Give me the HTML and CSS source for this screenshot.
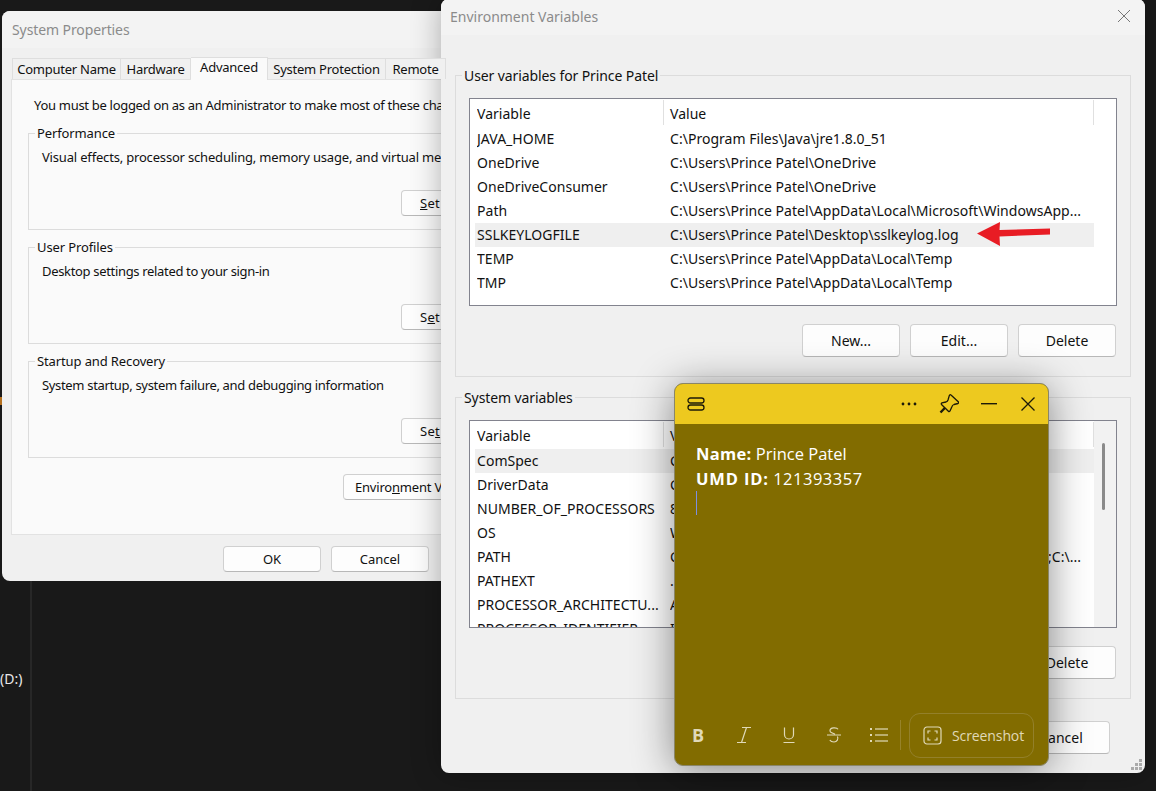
FILE: index.html
```html
<!DOCTYPE html>
<html lang="en">
<head>
<meta charset="utf-8">
<title>Environment Variables</title>
<link rel="stylesheet" href="styles.css">
</head>
<body>
<main class="desktop">
  <div class="bg-line"></div>
  <div class="bg-tick"></div>
  <div class="bg-drive">(D:)</div>

  <section class="window sys">
    <header class="sys-title">System Properties</header>
    <nav class="tabs">
      <span class="tab">Computer Name</span>
      <span class="tab">Hardware</span>
      <span class="tab tab-active">Advanced</span>
      <span class="tab">System Protection</span>
      <span class="tab">Remote</span>
    </nav>
    <div class="sys-panel">
      <p class="admin-note">You must be logged on as an Administrator to make most of these cha</p>
      <fieldset class="group">
        <legend>Performance</legend>
        <p class="line-wide">Visual effects, processor scheduling, memory usage, and virtual me</p>
        <div class="group-actions"><button class="btn btn-clip"><u>S</u>et</button></div>
      </fieldset>
      <fieldset class="group">
        <legend>User Profiles</legend>
        <p>Desktop settings related to your sign-in</p>
        <div class="group-actions"><button class="btn btn-clip">S<u>e</u>t</button></div>
      </fieldset>
      <fieldset class="group">
        <legend>Startup and Recovery</legend>
        <p>System startup, system failure, and debugging information</p>
        <div class="group-actions"><button class="btn btn-clip">Se<u>t</u></button></div>
      </fieldset>
      <div class="env-row"><button class="btn btn-env">Enviro<u>n</u>ment V</button></div>
    </div>
    <footer class="sys-footer">
      <button class="btn">OK</button>
      <button class="btn">Cancel</button>
    </footer>
  </section>

  <section class="window env">
    <header class="env-title">
      <span>Environment Variables</span>
      <svg class="env-close" width="14" height="14" viewBox="0 0 14 14"><path d="M1 1L13 13M13 1L1 13" stroke="#777" stroke-width="1" fill="none"/></svg>
    </header>
    <div class="env-body">
      <fieldset class="var-group">
        <legend>User variables for Prince Patel</legend>
        <div class="list">
          <div class="row row-head"><span>Variable</span><span>Value</span></div>
          <div class="row"><span>JAVA_HOME</span><span>C:\Program Files\Java\jre1.8.0_51</span></div>
          <div class="row"><span>OneDrive</span><span>C:\Users\Prince Patel\OneDrive</span></div>
          <div class="row"><span>OneDriveConsumer</span><span>C:\Users\Prince Patel\OneDrive</span></div>
          <div class="row"><span>Path</span><span>C:\Users\Prince Patel\AppData\Local\Microsoft\WindowsApp...</span></div>
          <div class="row row-sel"><span>SSLKEYLOGFILE</span><span>C:\Users\Prince Patel\Desktop\sslkeylog.log</span></div>
          <div class="row"><span>TEMP</span><span>C:\Users\Prince Patel\AppData\Local\Temp</span></div>
          <div class="row"><span>TMP</span><span>C:\Users\Prince Patel\AppData\Local\Temp</span></div>
          <svg class="arrow" width="76" height="26" viewBox="0 0 76 26"><path d="M1 12.5L24 1L23.5 9L74 7.5L74 13.5L23.5 15.5L24 25Z" fill="#e81c24"/></svg>
        </div>
        <div class="var-actions">
          <button class="btn">New...</button>
          <button class="btn">Edit...</button>
          <button class="btn">Delete</button>
        </div>
      </fieldset>
      <fieldset class="var-group var-group-sys">
        <legend>System variables</legend>
        <div class="list">
          <div class="row row-head"><span>Variable</span><span>V</span></div>
          <div class="row row-sel"><span>ComSpec</span><span>C</span></div>
          <div class="row"><span>DriverData</span><span>C</span></div>
          <div class="row"><span>NUMBER_OF_PROCESSORS</span><span>8</span></div>
          <div class="row"><span>OS</span><span>W</span></div>
          <div class="row"><span>PATH</span><span class="val-split"><span>C</span><span>;C:\...</span></span></div>
          <div class="row"><span>PATHEXT</span><span>.</span></div>
          <div class="row"><span>PROCESSOR_ARCHITECTU...</span><span>A</span></div>
          <div class="row"><span>PROCESSOR_IDENTIFIER</span><span>I</span></div>
          <div class="scrollbar"><div class="thumb"></div></div>
        </div>
        <div class="var-actions">
          <button class="btn">Delete</button>
        </div>
      </fieldset>
      <div class="env-footer">
        <button class="btn">Cancel</button>
      </div>
    </div>
    <svg class="grip" width="12" height="12" viewBox="0 0 12 12" fill="#aaa"><rect x="8" y="0" width="3" height="3"/><rect x="4" y="4" width="3" height="3"/><rect x="8" y="4" width="3" height="3"/><rect x="0" y="8" width="3" height="3"/><rect x="4" y="8" width="3" height="3"/><rect x="8" y="8" width="3" height="3"/></svg>
  </section>

  <section class="window note">
    <header class="note-head">
      <svg class="note-menu" width="18" height="14" viewBox="0 0 18 14" fill="none" stroke="#1c1a08" stroke-width="1.3"><rect x="1" y="1" width="16" height="5" rx="2.5"/><rect x="1" y="8" width="16" height="5" rx="2.5"/></svg>
      <div class="note-tools">
        <svg width="16" height="4" viewBox="0 0 16 4" fill="#1c1a08"><circle cx="2" cy="2" r="1.4"/><circle cx="8" cy="2" r="1.4"/><circle cx="14" cy="2" r="1.4"/></svg>
        <svg width="20" height="20" viewBox="0 0 20 20" fill="none" stroke="#1c1a08" stroke-width="1.3" stroke-linejoin="round"><path d="M12 1L19.5 8a1 1 0 0 1-.5 1.5L15 10.5Q13.5 11 13 12.5L11 17a1 1 0 0 1-1.6.2L2.5 10.5a1 1 0 0 1 .4-1.6L7 8Q8.5 7.5 9 6L10.3 1.6a1 1 0 0 1 1.7-.6Z"/><path d="M5.8 14L1.5 18.5" stroke-width="2.4"/></svg>
        <svg width="17" height="2" viewBox="0 0 17 2"><rect width="16" height="1.4" fill="#1c1a08"/></svg>
        <svg width="16" height="16" viewBox="0 0 16 16"><path d="M1.5 1.5L14.5 14.5M14.5 1.5L1.5 14.5" stroke="#1c1a08" stroke-width="1.3" fill="none"/></svg>
      </div>
    </header>
    <div class="note-body">
      <p><b>Name:</b> Prince Patel</p>
      <p><b class="umd">UMD ID:</b> <span class="digits">121393357</span></p>
      <div class="caret"></div>
    </div>
    <footer class="note-bar">
      <span class="bold-icon">B</span>
      <svg width="16" height="18" viewBox="0 0 16 18" fill="none" stroke="#e0d9b8" stroke-width="1.2"><path d="M5 1.5H14M0 16.5H9M9.5 1.5L4.5 16.5"/></svg>
      <svg width="16" height="18" viewBox="1 0 16 18" fill="none" stroke="#e0d9b8" stroke-width="1.2"><path d="M3.5 1.5V8.5a4.5 4.5 0 0 0 9 0V1.5M2.5 16.5H13.5"/></svg>
      <svg width="16" height="18" viewBox="1 0 16 18" fill="none" stroke="#e0d9b8" stroke-width="1.2"><path d="M12 3.2C11 1.5 4 1 4 4.8C4 7 8 7.6 9 8M1 9H15M11.4 10.5C12.8 13 11 16 8 16C6 16 4.5 15.2 3.8 14"/></svg>
      <svg class="list-icon" width="18" height="14" viewBox="0 0 18 14" fill="#e0d9b8"><rect x="0" y="0" width="2" height="2"/><rect x="0" y="6" width="2" height="2"/><rect x="0" y="12" width="2" height="2"/><rect x="5" y="0.4" width="13" height="1.2"/><rect x="5" y="6.4" width="13" height="1.2"/><rect x="5" y="12.4" width="13" height="1.2"/></svg>
      <span class="bar-sep"></span>
      <span class="shot">
        <svg width="19" height="19" viewBox="0 0 19 19" fill="none" stroke="#e0d9b8" stroke-width="1.2"><rect x="1" y="1" width="17" height="17" rx="3"/><path d="M5 7.5V5H7.5M11.5 5H14V7.5M14 11.5V14H11.5M7.5 14H5V11.5"/></svg>
        Screenshot
      </span>
    </footer>
  </section>
</main>
</body>
</html>
```

FILE: styles.css
```css
* { box-sizing: border-box; }
html, body { margin: 0; height: 100%; }
body { background: #191919; overflow: hidden; }
.desktop {
  position: relative;
  width: 1156px;
  height: 791px;
  overflow: hidden;
  background: #191919;
  font-family: "Noto Sans", "Open Sans", sans-serif;
  font-size: 13px;
  color: #111;
}
.bg-line { position: absolute; left: 30px; top: 581px; bottom: 0; width: 2px; background: #272727; }
.bg-tick { position: absolute; left: 0; top: 397px; width: 2px; height: 8px; background: #b5701e; }
.bg-drive { position: absolute; left: 0; top: 669px; color: #e8e8e8; font-size: 14px; line-height: 19px; }
.window { position: absolute; }
button { font: inherit; color: inherit; }
.btn {
  flex: none;
  height: 26px;
  width: 98px;
  padding: 0;
  background: #fdfdfd;
  border: 1px solid #d0d0d0;
  border-bottom-color: #b8b8b8;
  border-radius: 4px;
  white-space: nowrap;
}
.btn-clip { text-align: left; padding-left: 18px; letter-spacing: 0.3px; }

/* System Properties */
.sys {
  left: 2px;
  top: 11px;
  width: 545px;
  height: 570px;
  display: flex;
  flex-direction: column;
  background: #f0f0f0;
  border-radius: 8px;
  overflow: hidden;
}
.sys-title {
  height: 37px;
  flex: none;
  padding: 9px 10px 0;
  background: #f3f3f3;
  color: #8b8b8b;
  font-size: 14px;
  line-height: 19px;
  letter-spacing: -0.1px;
}
.tabs {
  flex: none;
  display: flex;
  align-items: flex-end;
  height: 23px;
  margin-top: 8px;
  padding: 0 0 0 10px;
  position: relative;
  z-index: 1;
  letter-spacing: -0.25px;
}
.tab {
  flex: none;
  height: 21px;
  text-align: center;
  line-height: 20px;
  background: #f0f0f0;
  border: 1px solid #dedede;
  border-bottom: 0;
  border-left: 0;
}
.tab:nth-child(1) { width: 109px; border-left: 1px solid #dedede; }
.tab:nth-child(2) { width: 70px; }
.tab:nth-child(3) { width: 77px; }
.tab:nth-child(4) { width: 118px; }
.tab:nth-child(5) { width: 60px; }
.tab-active {
  height: 23px;
  line-height: 19px;
  background: #fafafa;
  margin-bottom: -1px;
}
.sys-panel {
  flex: 1;
  margin: 0 9px;
  padding: 15px 24px 0 16px;
  width: 525px;
  background: #fafafa;
  border: 1px solid #e2e2e2;
  display: flex;
  flex-direction: column;
}
.admin-note { margin: 0 0 11px 6px; line-height: 20px; white-space: nowrap; letter-spacing: -0.3px; }
.group {
  margin: 0 0 10px;
  padding: 0 0 0 13px;
  height: 104px;
  border: 1px solid #dcdcdc;
  flex: none;
}
.group legend { padding: 0 2px; margin-left: -7px; line-height: 14px; height: 14px; letter-spacing: -0.12px; }
.group p { margin: 0; line-height: 20px; padding-top: 7px; white-space: nowrap; letter-spacing: -0.33px; }
.group .line-wide { letter-spacing: -0.18px; }
.group-actions { display: flex; justify-content: flex-end; padding-top: 23px; padding-right: 11px; }
.env-row { display: flex; justify-content: flex-end; padding-top: 6px; }
.btn-env { width: 168px; text-align: left; padding-left: 11px; letter-spacing: -0.2px; }
.sys-footer {
  flex: none;
  height: 46px;
  display: flex;
  gap: 10px;
  justify-content: flex-end;
  align-items: center;
  padding: 2px 118px 0 0;
}

/* Environment Variables */
.env {
  left: 441px;
  top: -1px;
  width: 704px;
  height: 774px;
  background: #f0f0f0;
  border-radius: 8px;
  box-shadow: 0 0 30px rgba(0,0,0,.3);
  display: flex;
  flex-direction: column;
  overflow: hidden;
}
.env-title {
  flex: none;
  height: 36px;
  padding: 8px 14px 0 9px;
  display: flex;
  justify-content: space-between;
  background: #f3f3f3;
  color: #8b8b8b;
  font-size: 14px;
  line-height: 19px;
}
.env-close { margin-top: 2px; }
.env-body { flex: 1; padding: 32px 14px 0 14px; display: flex; flex-direction: column; }
.var-group {
  margin: 0;
  padding: 0 13px;
  height: 310px;
  border: 1px solid #dcdcdc;
  flex: none;
}
.var-group legend { padding: 0 2px; margin-left: -7px; line-height: 18px; height: 16px; font-size: 14px; letter-spacing: -0.1px; }
.var-group-sys { margin-top: 12px; }
.list {
  position: relative;
  height: 208px;
  margin-top: 15px;
  padding: 0 22px 0 5px;
  background: #fff;
  border: 1px solid #82838e;
  overflow: hidden;
}
.row {
  display: grid;
  grid-template-columns: 193px 1fr;
  height: 24px;
  line-height: 24px;
  padding-left: 2px;
  font-size: 14px;
  white-space: nowrap;
  letter-spacing: 0.03px;
}
.row > span { overflow: hidden; padding-right: 4px; }
.row-head { height: 28px; line-height: 29px; }
.row-head > span + span { border-left: 1px solid #e0e0e0; margin-left: -7px; padding-left: 6px; border-right: 1px solid #e0e0e0; margin-top: 1px; height: 25px; line-height: 27px; }
.row-sel { background: #efefef; }
.row > .val-split { display: flex; justify-content: space-between; padding-right: 13px; }
.arrow { position: absolute; left: 506px; top: 122px; }
.scrollbar { position: absolute; right: 0; top: 0; bottom: 0; width: 22px; background: #f2f2f2; }
.thumb { position: absolute; left: 8px; top: 22px; width: 3px; height: 67px; border-radius: 2px; background: #8a8a8a; }
.var-actions { display: flex; gap: 10px; justify-content: flex-end; padding: 18px 1px 0 0; }
.var-actions .btn { height: 33px; font-size: 14px; }
.env-footer { display: flex; gap: 10px; justify-content: flex-end; padding: 22px 21px 0 0; }
.env-footer .btn { height: 33px; font-size: 14px; }
.grip { position: absolute; right: 2px; bottom: 2px; }

/* Sticky note */
.note {
  left: 674px;
  top: 383px;
  width: 375px;
  height: 383px;
  background: #826c00;
  border: 1px solid #8a8668;
  border-radius: 9px;
  box-shadow: 0 4px 40px rgba(0,0,0,.45);
  display: flex;
  flex-direction: column;
  font-family: "Open Sans", "Noto Sans", sans-serif;
  color: #fff;
  overflow: hidden;
}
.note-head {
  flex: none;
  height: 40px;
  background: #edc91f;
  display: flex;
  align-items: center;
  justify-content: space-between;
  padding: 0 12px;
}
.note-tools { display: flex; align-items: center; gap: 22px; }
.note-body { flex: 1; padding: 17px 21px 0; font-size: 16.5px; line-height: 25px; }
.note-body p { margin: 0; white-space: nowrap; }
.note-body b { letter-spacing: 0.3px; }
.note-body .umd { letter-spacing: 0.85px; }
.digits { letter-spacing: 0.5px; }
.caret { width: 1px; height: 24px; background: #7d8fe0; }
.note-bar {
  flex: none;
  height: 59px;
  padding: 0 0 1px 17px;
  display: flex;
  align-items: center;
  gap: 29px;
  color: #e0d9b8;
}
.note-bar > * { flex: none; }
.bold-icon { font-weight: 700; font-size: 18px; line-height: 18px; width: 16px; }
.list-icon { margin-left: -2px; }
.bar-sep { width: 1px; height: 30px; background: #97832a; margin-left: -17px; margin-right: -21px; }
.shot {
  display: flex;
  align-items: center;
  gap: 10px;
  height: 45px;
  width: 125px;
  padding-left: 13px;
  border: 1px solid #93802a;
  border-radius: 11px;
  font-size: 14px;
  white-space: nowrap;
  letter-spacing: -0.1px;
}
```
